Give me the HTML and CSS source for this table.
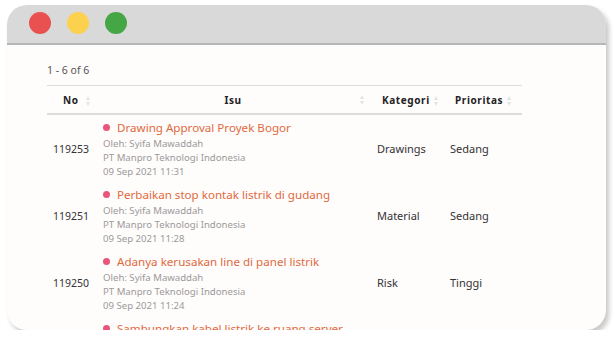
FILE: index.html
```html
<!DOCTYPE html>
<html>
<head>
<meta charset="utf-8">
<link rel="stylesheet" href="styles.css">
</head>
<body>
<div class="window">
  <div class="titlebar">
    <span class="light red"></span>
    <span class="light yellow"></span>
    <span class="light green"></span>
  </div>
  <div class="content">
    <div class="count">1 - 6 of 6</div>
    <table class="grid">
      <colgroup>
        <col class="c-no"><col class="c-isu"><col class="c-kat"><col class="c-pri">
      </colgroup>
      <thead>
        <tr>
          <th class="h-no">No <span class="sort"></span></th>
          <th class="h-isu"><span class="isu-label">Isu</span><span class="sort"></span></th>
          <th class="h-kat">Kategori<span class="sort"></span></th>
          <th class="h-pri">Prioritas<span class="sort"></span></th>
        </tr>
      </thead>
      <tbody>
        <tr>
          <td class="num">119253</td>
          <td class="issue">
            <div class="title"><span class="dot"></span>Drawing Approval Proyek Bogor</div>
            <div class="meta">Oleh: Syifa Mawaddah</div>
            <div class="meta">PT Manpro Teknologi Indonesia</div>
            <div class="meta">09 Sep 2021 11:31</div>
          </td>
          <td class="kat">Drawings</td>
          <td class="pri">Sedang</td>
        </tr>
        <tr>
          <td class="num">119251</td>
          <td class="issue">
            <div class="title"><span class="dot"></span>Perbaikan stop kontak listrik di gudang</div>
            <div class="meta">Oleh: Syifa Mawaddah</div>
            <div class="meta">PT Manpro Teknologi Indonesia</div>
            <div class="meta">09 Sep 2021 11:28</div>
          </td>
          <td class="kat">Material</td>
          <td class="pri">Sedang</td>
        </tr>
        <tr>
          <td class="num">119250</td>
          <td class="issue">
            <div class="title"><span class="dot"></span>Adanya kerusakan line di panel listrik</div>
            <div class="meta">Oleh: Syifa Mawaddah</div>
            <div class="meta">PT Manpro Teknologi Indonesia</div>
            <div class="meta">09 Sep 2021 11:24</div>
          </td>
          <td class="kat">Risk</td>
          <td class="pri">Tinggi</td>
        </tr>
        <tr>
          <td class="num">119248</td>
          <td class="issue">
            <div class="title"><span class="dot"></span>Sambungkan kabel listrik ke ruang server</div>
            <div class="meta">Oleh: Syifa Mawaddah</div>
            <div class="meta">PT Manpro Teknologi Indonesia</div>
            <div class="meta">09 Sep 2021 11:20</div>
          </td>
          <td class="kat">Risk</td>
          <td class="pri">Sedang</td>
        </tr>
      </tbody>
    </table>
  </div>
</div>
</body>
</html>
```

FILE: styles.css
```css
html, body {
  margin: 0;
  padding: 0;
  background: #ffffff;
}
body {
  padding: 5px 0 0 7px;
  font-family: "Noto Sans", "DejaVu Sans", sans-serif;
}
.window {
  width: 599px;
  height: 325px;
  border-radius: 20px;
  overflow: hidden;
  background: #fffcfc;
  box-shadow: 3px 4px 5px rgba(0, 0, 0, 0.22);
  display: flex;
  flex-direction: column;
}
.titlebar {
  height: 38px;
  flex: none;
  background: #d9d9d9;
  border-bottom: 2px solid #b6b6b6;
  display: flex;
  align-items: center;
  padding-left: 22px;
  gap: 16px;
}
.light {
  width: 22px;
  height: 22px;
  border-radius: 50%;
  display: block;
  margin-top: -2px;
}
.red { background: #e95151; }
.yellow { background: #fbd14d; }
.green { background: #45a645; }
.content {
  padding: 18px 0 0 40px;
}
.count {
  font-size: 10.5px;
  color: #555;
  line-height: 14px;
  height: 14px;
}
.grid {
  margin-top: 8px;
  border-collapse: collapse;
  table-layout: fixed;
  width: 475px;
}
.c-no { width: 53px; }
.c-isu { width: 270px; }
.c-kat { width: 74px; }
.c-pri { width: 78px; }
thead th {
  border-top: 1px solid #dcdcdc;
  border-bottom: 2px solid #dcdcdc;
  height: 27px;
  padding: 0;
  font-size: 10px;
  font-weight: 700;
  letter-spacing: 0.6px;
  color: #222;
  text-align: left;
  vertical-align: middle;
}
.h-no { padding-left: 16px; }
.h-isu { position: relative; }
.isu-label { display: block; text-align: center; padding-right: 4px; }
.h-isu .sort { position: absolute; right: 5px; top: 9px; }
.h-kat { padding-left: 12px; }
.h-pri { padding-left: 11px; }
.sort {
  display: inline-block;
  width: 5px;
  height: 10px;
  vertical-align: middle;
  margin-left: 4px;
  position: relative;
}
.sort::before, .sort::after {
  content: "";
  position: absolute;
  left: 0;
  border-left: 2.5px solid transparent;
  border-right: 2.5px solid transparent;
}
.sort::before {
  top: 0;
  border-bottom: 4px solid #e3e3e3;
}
.sort::after {
  bottom: 0;
  border-top: 4px solid #e3e3e3;
}
tbody td {
  height: 67px;
  padding: 0;
  vertical-align: middle;
  font-size: 11px;
  line-height: 18px;
  color: #333;
}
.num { padding-left: 6px; font-size: 10.5px; }
.kat { padding-left: 7px; }
.pri { padding-left: 6px; }
.issue {
  padding-left: 3px;
}
.title {
  color: #e06a3c;
  font-size: 11.6px;
  line-height: 18px;
  white-space: nowrap;
  display: flex;
  align-items: center;
}
.dot {
  width: 7px;
  height: 7px;
  border-radius: 50%;
  background: #e9567a;
  margin-right: 7px;
  flex: none;
}
.meta {
  font-size: 9.6px;
  color: #9a9a9a;
  line-height: 14px;
  white-space: nowrap;
}
```
